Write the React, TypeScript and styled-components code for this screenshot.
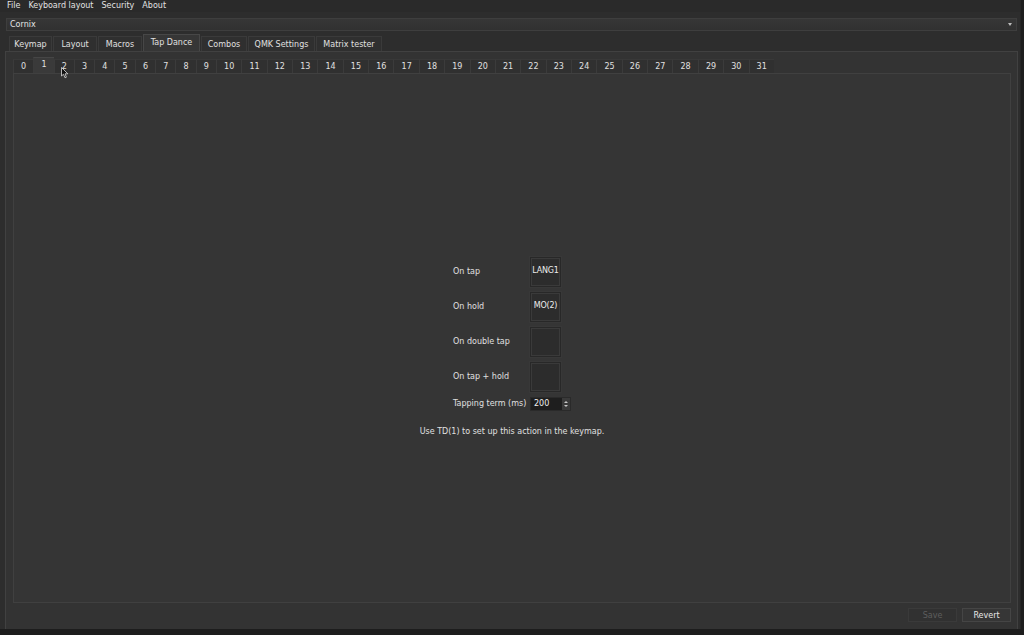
import * as React from 'react';
import styled, { createGlobalStyle } from 'styled-components';

const GlobalStyle = createGlobalStyle`
  html, body {
    margin: 0;
    padding: 0;
    background: #1c1c1c;
    font-family: 'DejaVu Sans', 'Liberation Sans', sans-serif;
    font-size: 8px;
    color: #dedede;
  }
`;

const Screen = styled.div`
  width: 1024px;
  height: 635px;
  background: #1d1d1d;
  overflow: hidden;
`;

const Window = styled.div`
  width: 1020px;
  height: 629px;
  background: #2d2d2d;
  display: flex;
  flex-direction: column;
  border-right: 1px solid #262626;
`;

const MenuBar = styled.div`
  height: 12px;
  display: flex;
  align-items: center;
  gap: 8px;
  padding-left: 7px;
  background: #2a2a2a;
`;

const MenuItem = styled.span`
  line-height: 12px;
  color: #e2e2e2;
`;

const Body = styled.div`
  flex: 1;
  display: flex;
  flex-direction: column;
  padding: 6px 2px 0 5px;
  min-height: 0;
`;

const Combo = styled.div`
  height: 13px;
  margin: 0 1px 0 1px;
  box-sizing: border-box;
  border: 1px solid #3e3e3e;
  background: linear-gradient(#363636, #313131);
  display: flex;
  align-items: center;
  justify-content: space-between;
  padding: 0 4px 0 3px;
  color: #e4e4e4;
`;

const Caret = styled.span`
  width: 0;
  height: 0;
  border-left: 2.5px solid transparent;
  border-right: 2.5px solid transparent;
  border-top: 3px solid #bdbdbd;
`;

const TabRow = styled.div`
  display: flex;
  align-items: flex-end;
  height: 17px;
  margin-top: 3px;
  padding-left: 4px;
`;

const Tab = styled.div<{ $w: number; $active?: boolean }>`
  width: ${(p) => p.$w}px;
  height: ${(p) => (p.$active ? 17 : 15)}px;
  box-sizing: border-box;
  display: flex;
  align-items: center;
  justify-content: center;
  margin-right: 1px;
  background: ${(p) => (p.$active ? '#363636' : '#2f2f2f')};
  border: 1px solid ${(p) => (p.$active ? '#474747' : '#3a3a3a')};
  border-bottom: none;
  color: #e0e0e0;
  padding-bottom: ${(p) => (p.$active ? 2 : 0)}px;
`;

const Pane = styled.div`
  flex: 1;
  display: flex;
  flex-direction: column;
  background: #333333;
  border: 1px solid #414141;
  border-bottom: none;
  padding: 5px 6px 0 7px;
  min-height: 0;
`;

const NumRow = styled.div`
  display: flex;
  align-items: flex-end;
  height: 16px;
`;

const NumTab = styled.div<{ $w: number; $active?: boolean }>`
  width: ${(p) => p.$w}px;
  height: ${(p) => (p.$active ? 16 : 14)}px;
  box-sizing: border-box;
  display: flex;
  align-items: center;
  justify-content: center;
  background: ${(p) => (p.$active ? '#3a3a3a' : '#303030')};
  border-left: 1px solid #3b3b3b;
  border-top: 1px solid ${(p) => (p.$active ? '#464646' : '#383838')};
  color: #e0e0e0;
  padding-bottom: ${(p) => (p.$active ? 2 : 0)}px;
`;

const Inner = styled.div`
  height: 530px;
  box-sizing: border-box;
  border: 1px solid #404040;
  background: #353535;
  display: flex;
  flex-direction: column;
  align-items: center;
  justify-content: center;
`;

const Form = styled.div`
  display: grid;
  grid-template-columns: 77px auto;
  row-gap: 5px;
  align-items: center;
  margin-top: 16px;
`;

const Label = styled.span`
  color: #e0e0e0;
  line-height: 10px;
`;

const KeyButton = styled.div`
  width: 31px;
  height: 30px;
  box-sizing: border-box;
  background: #2c2c2c;
  border: 1px solid #282828;
  box-shadow: inset 0 0 0 1px #3a3a3a, 0 0 0 1px #383838;
  display: flex;
  justify-content: center;
  padding-top: 8px;
  color: #ececec;
  font-size: 8px;
  letter-spacing: -0.2px;
`;

const SpinBox = styled.div`
  width: 41px;
  height: 14px;
  box-sizing: border-box;
  background: #1e1e1e;
  border: 1px solid #2a2a2a;
  display: flex;
  align-items: center;
  justify-content: space-between;
  padding-left: 3px;
  color: #f0f0f0;
`;

const Spinner = styled.div`
  width: 8px;
  height: 12px;
  background: #3a3a3a;
  display: flex;
  flex-direction: column;
  align-items: center;
  justify-content: center;
  gap: 2px;
`;

const Arrow = styled.span<{ $up?: boolean }>`
  width: 0;
  height: 0;
  border-left: 2px solid transparent;
  border-right: 2px solid transparent;
  ${(p) => (p.$up ? 'border-bottom' : 'border-top')}: 2px solid #c8c8c8;
`;

const Hint = styled.div`
  margin-top: 16px;
  color: #e0e0e0;
`;

const Footer = styled.div`
  flex: 1;
  display: flex;
  justify-content: flex-end;
  align-items: flex-start;
  gap: 5px;
  padding-top: 5px;
`;

const Button = styled.div<{ $disabled?: boolean }>`
  width: 49px;
  height: 14px;
  box-sizing: border-box;
  display: flex;
  align-items: center;
  justify-content: center;
  background: ${(p) => (p.$disabled ? '#313131' : '#363636')};
  border: 1px solid ${(p) => (p.$disabled ? '#3a3a3a' : '#454545')};
  color: ${(p) => (p.$disabled ? '#5e5e5e' : '#e6e6e6')};
`;

const Cursor = styled.svg`
  position: absolute;
  left: 61px;
  top: 67px;
`;

const mainTabs: [string, number][] = [
  ['Keymap', 43],
  ['Layout', 44],
  ['Macros', 44],
  ['Tap Dance', 57],
  ['Combos', 46],
  ['QMK Settings', 67],
  ['Matrix tester', 66],
];

const slots = [
  { label: 'On tap', key: 'LANG1' },
  { label: 'On hold', key: 'MO(2)' },
  { label: 'On double tap', key: '' },
  { label: 'On tap + hold', key: '' },
];

export default function App() {
  return (
    <Screen>
      <GlobalStyle />
      <Window>
        <MenuBar>
          <MenuItem>File</MenuItem>
          <MenuItem>Keyboard layout</MenuItem>
          <MenuItem>Security</MenuItem>
          <MenuItem>About</MenuItem>
        </MenuBar>
        <Body>
          <Combo>
            <span>Cornix</span>
            <Caret />
          </Combo>
          <TabRow>
            {mainTabs.map(([name, w]) => (
              <Tab key={name} $w={w} $active={name === 'Tap Dance'}>
                {name}
              </Tab>
            ))}
          </TabRow>
          <Pane>
            <NumRow>
              {Array.from({ length: 32 }, (_, i) => (
                <NumTab key={i} $w={i < 10 ? 20.3 : 25.36} $active={i === 1}>
                  {i}
                </NumTab>
              ))}
            </NumRow>
            <Inner>
              <Form>
                {slots.map((s) => (
                  <React.Fragment key={s.label}>
                    <Label>{s.label}</Label>
                    <KeyButton>{s.key}</KeyButton>
                  </React.Fragment>
                ))}
                <Label>Tapping term (ms)</Label>
                <SpinBox>
                  <span>200</span>
                  <Spinner>
                    <Arrow $up />
                    <Arrow />
                  </Spinner>
                </SpinBox>
              </Form>
              <Hint>Use TD(1) to set up this action in the keymap.</Hint>
            </Inner>
            <Footer>
              <Button $disabled>Save</Button>
              <Button>Revert</Button>
            </Footer>
          </Pane>
        </Body>
      </Window>
      <Cursor width="8" height="12" viewBox="0 0 8 12">
        <path d="M0.5 0.5 L0.5 9 L2.5 7.2 L4 10.8 L5.4 10.2 L4 6.8 L6.8 6.8 Z" fill="#111" stroke="#ddd" strokeWidth="0.8" />
      </Cursor>
    </Screen>
  );
}
